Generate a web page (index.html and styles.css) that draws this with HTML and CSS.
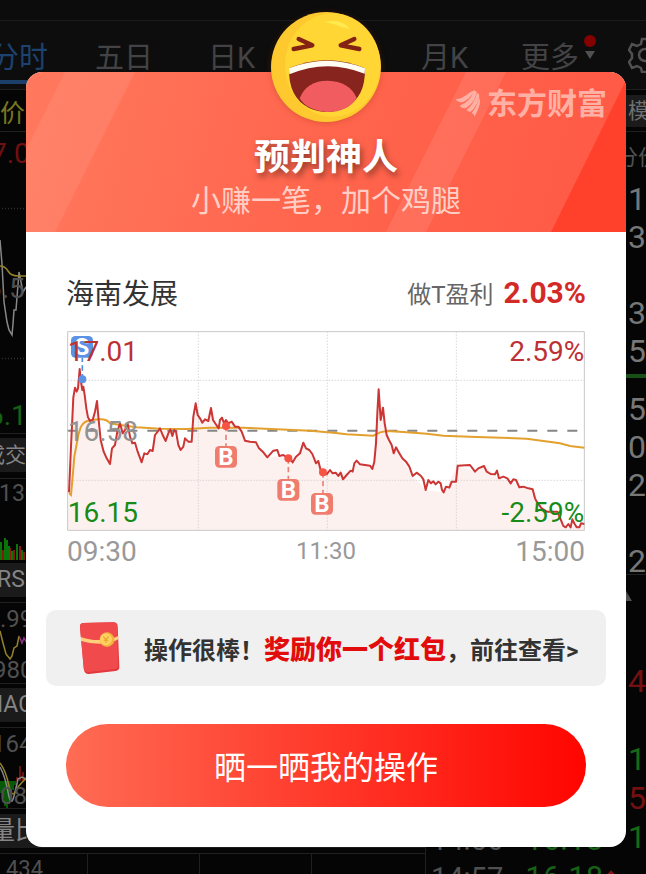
FILE: index.html
```
<!DOCTYPE html>
<html lang="zh-CN">
<head>
    <meta charset="UTF-8">
    <title>预判神人</title>
    <link rel="stylesheet" href="styles.css">
</head>
<body>
    <div class="quote">
        <div class="status"></div>
        <div class="tabs">
            <span class="tab active">分时</span>
            <span class="tab">五日</span>
            <span class="tab">日K</span>
            <span class="tab month">月K</span>
            <span class="tab more">更多<i class="dot"></i><i class="arrow"></i></span>
            <svg class="gear" width="34" height="36" viewBox="0 0 34 36">
                <path d="M14 2h7l1 5 4 2 5-2 3 6-4 4v4l4 4-3 6-5-2-4 2-1 4h-7l-1-4-4-2-5 2-3-6 3-4v-4l-3-4 3-6 5 2 4-2z"/>
                <circle cx="17" cy="18" r="6"/>
            </svg>
        </div>
        <div class="avg">
            <span>价</span>
            <span class="mode">模</span>
        </div>
        <div class="main">
            <div class="left">
                <div class="panel price">
                    <svg width="60" height="301">
                        <path class="dots" d="M2 76.500H60M2 226.500H60"/>
                        <path class="white-line" d="M0 108L2 132 4 170 7 190 9 198 12 203 13 192 14 178 16 178 19 140 21 150 23 160 26 155"/>
                        <path class="yellow-line" d="M0 134Q5 134 8 139T18 144H28"/>
                    </svg>
                    <span class="up">7.0</span>
                    <span class="mid">6.58</span>
                    <span class="down">6.1</span>
                </div>
                <div class="head deal">成交量</div>
                <div class="panel volume">
                    <span>130</span>
                    <svg width="60" height="24">
                        <path class="red-bar" d="M3 24V14M10 24V12M14 24V14M20 24V10M24 24V16"/>
                        <path class="green-bar" d="M1 24V6M5 24V2M7 24V4M9 24V10M12 24V15M17 24V8M22 24V14"/>
                    </svg>
                </div>
                <div class="head rsi">RSI</div>
                <div class="panel rs">
                    <svg width="60" height="80">
                        <path class="yellow-line" d="M0 28L3 40 6 51 10 56 12 53 14 45 17 43 19 33"/>
                        <path class="pink-line" d="M19 33L22 40 24 35 27 40"/>
                    </svg>
                    <span class="top">.99</span>
                    <span class="bottom">980</span>
                </div>
                <div class="head macd">MACD</div>
                <div class="panel mac">
                    <svg width="60" height="80">
                        <path class="green-bar" d="M1 53V65M3 53V70M5 53V78M7 53V80M9 53V76M11 53V68M13 53V62M15 53V57"/>
                        <path class="red-bar" d="M17 53V49M20 53V38M23 53V44M25 53V50"/>
                        <path class="white-line" d="M0 39Q5 48 8 64T14 68 18 51L22 49 26 51"/>
                        <path class="yellow-line" d="M0 35Q6 43 9 58T18 59L26 50"/>
                    </svg>
                    <span class="top">164</span>
                    <span class="bottom">08.</span>
                </div>
                <div class="head ratio">量比</div>
                <div class="panel last"><span>434</span></div>
            </div>
            <div class="ticks">
                <p>14:56 <b>16.18</b></p>
                <p>14:57 <b>16.18</b><i></i></p>
            </div>
            <div class="right">
                <div class="label">分价</div>
                <div class="num">1</div>
                <div class="num">3</div>
                <div class="num"></div>
                <div class="num">3</div>
                <div class="num">5</div>
                <div class="bar"></div>
                <div class="num">5</div>
                <div class="num">0</div>
                <div class="num">2</div>
                <div class="num"></div>
                <div class="num line">2</div>
                <div class="triangle"></div>
                <div class="num red">4</div>
                <div class="num"></div>
                <div class="num green">1</div>
                <div class="num red">5</div>
                <div class="num green">1</div>
            </div>
        </div>
    </div>

    <div class="card">
        <svg class="emoji" width="122" height="122" viewBox="0 0 366 366">
            <circle cx="183" cy="186" r="165" fill="#fdc92f"/>
            <ellipse cx="203" cy="180" rx="143" ry="155" fill="#ffd633"/>
            <path d="M178 52Q225 38 256 71Q228 67 213 59Q195 55 178 52Z" fill="#ffea4f"/>
            <path d="M101 102L142 121 86 132M268 102L227 121 283 132" fill="none" stroke="#842213" stroke-width="13" stroke-linecap="round" stroke-linejoin="round"/>
            <path d="M72 190Q186 142 300 190Q302 278 240 309Q186 333 132 309Q70 278 72 190Z" fill="#87241e"/>
            <path d="M104 280Q125 227 188 227Q254 229 275 279Q250 321 186 321Q126 317 104 280Z" fill="#f15c60"/>
            <path d="M72 190Q186 145 300 190L299 206Q186 160 73 208Z" fill="#fffdf2"/>
        </svg>
        <div class="header">
            <svg class="stripes" width="600" height="160">
                <path d="M39 0H109L29 160H-41Z" fill="#fff" opacity=".08"/>
                <path d="M440 0H480L400 160H360Z" fill="#fff" opacity=".09"/>
                <path d="M604 0L525 160H600V0Z" fill="#ff3b25" opacity=".8"/>
            </svg>
            <div class="logo">
                <svg width="28" height="28" viewBox="0 0 84 84">
                    <path d="M4 28Q22 29 48 7Q61 0 63 2Q47 26 29 35Q13 41 4 28Z"/>
                    <path d="M17 47Q48 36 60 3Q66 0 68 8Q61 39 36 54Q25 57 17 47Z"/>
                    <path d="M37 60Q60 44 69 9Q75 9 76 17Q71 47 50 65Q43 66 37 60Z"/>
                    <path d="M53 69Q71 48 75 20Q81 38 74 52Q70 65 61 81Q62 72 53 69Z"/>
                </svg>
                <span>东方财富</span>
            </div>
            <h2>预判神人</h2>
            <p>小赚一笔，加个鸡腿</p>
        </div>
        <div class="content">
            <div class="stock">
                <span class="name">海南发展</span>
                <span class="label">做T盈利</span>
                <span class="profit">2.03%</span>
            </div>
            <svg class="chart" width="520" height="200" viewBox="18 33 1560 600">
                <path class="area" d="M27 517L33 380 40 232 50 215 59 147 70 200 84 292 98 300 111 243 122 360 150 432 156 385 180 310 203 310 217 370 245 427 278 393 293 335 331 328 362 390 375 355 395 365 407 250 427 308 453 264 476 325 498 300 535 320 555 362 588 367 622 412 658 408 698 427 730 368 775 423 783 455 880 460 890 422 937 447 956 208 980 345 1058 468 1097 510 1151 517 1193 437 1245 455 1272 438 1317 475 1418 508 1445 565 1492 575 1520 622 1573 612V631H23Z"/>
                <path class="grid" d="M415 35V631M802 35V631M1189 35V631M23 181H1573M23 481H1573"/>
                <path class="middle" d="M22 332H1573"/>
                <path class="frame" d="M23 35H1573V631H23Z"/>
                <path class="average" d="M27 520L33 525 38 470 43 410 50 372 55 345 62 322Q70 305 85 302T120 298 150 310L180 315 230 322 300 326 380 327 450 323 550 323 650 328 750 332 820 338 860 343 940 347 960 337 980 333 1030 336 1100 341 1150 347 1250 351 1400 356 1500 370 1530 378 1573 383"/>
                <path class="now" d="M27 517L33 380 40 232 45 203 50 215 54 205 59 147 62 180 67 210 70 200 74 225 79 265 84 292 90 303 98 300 105 275 111 243 116 300 122 360 131 395 140 415 150 432 156 385 165 375 172 335 180 310 188 340 195 330 203 310 210 350 217 370 225 368 233 395 245 427 253 400 262 403 270 390 278 393 285 345 293 335 300 325 308 345 317 363 325 340 331 328 337 348 343 330 348 335 355 375 362 390 370 380 375 355 385 365 395 365 400 290 407 250 413 285 420 295 427 308 435 298 445 303 453 264 459 300 467 312 476 325 480 300 486 293 492 310 498 300 505 310 515 305 525 320 535 320 545 335 555 362 570 365 588 367 597 385 610 397 622 412 640 392 652 390 658 408 670 405 680 412 690 415 698 427 708 410 720 400 730 368 738 385 748 390 757 402 768 430 775 423 783 455 790 463 800 463 810 450 818 460 827 458 835 468 842 458 849 478 860 465 872 452 878 455 883 430 890 422 900 433 930 437 937 447 943 425 948 370 952 280 956 208 962 300 969 263 974 310 980 345 987 360 995 375 1001 400 1008 382 1017 398 1027 415 1038 425 1048 440 1058 468 1070 458 1083 468 1090 478 1097 510 1105 480 1113 490 1120 484 1127 493 1135 485 1142 490 1146 510 1151 517 1158 500 1168 503 1175 485 1188 485 1193 437 1230 435 1245 455 1255 445 1272 438 1280 455 1292 462 1305 463 1311 452 1317 475 1330 470 1342 475 1352 490 1360 478 1368 480 1378 502 1390 500 1405 505 1418 508 1425 535 1430 545 1445 565 1460 575 1492 575 1502 598 1510 618 1517 622 1525 612 1532 622 1537 598 1544 612 1550 622 1558 622 1563 610 1573 612"/>
                <g class="sell">
                    <path d="M67 178V113"/>
                    <circle cx="67" cy="178" r="12"/>
                    <rect x="33" y="48" width="66" height="65" rx="13"/>
                    <text x="66" y="106">S</text>
                </g>
                <g class="buy">
                    <path d="M498 318V380M685 415V480M789 457V520"/>
                    <circle cx="498" cy="318" r="12"/>
                    <circle cx="685" cy="415" r="12"/>
                    <circle cx="789" cy="457" r="12"/>
                    <rect x="465" y="378" width="66" height="65" rx="13"/>
                    <rect x="652" y="477" width="66" height="65" rx="13"/>
                    <rect x="753" y="519" width="66" height="65" rx="13"/>
                    <text x="498" y="436">B</text>
                    <text x="685" y="535">B</text>
                    <text x="786" y="577">B</text>
                </g>
                <g class="labels">
                    <text class="red" x="23" y="122">17.01</text>
                    <text class="red end" x="1573" y="122">2.59%</text>
                    <text class="gray" x="23" y="362">16.58</text>
                    <text class="green" x="23" y="605">16.15</text>
                    <text class="green end" x="1573" y="605">-2.59%</text>
                </g>
            </svg>
            <div class="times">
                <span>09:30</span>
                <span class="noon">11:30</span>
                <span>15:00</span>
            </div>
        </div>
        <div class="reward">
            <svg width="44" height="56" viewBox="0 0 132 168">
                <path d="M18 9Q8 10 9 22L21 151Q24 163 36 162L116 153Q127 151 127 140L122 18Q121 7 110 7Z" fill="#e2383e"/>
                <path d="M18 9Q8 10 9 22L20 145Q22 156 34 156L113 147Q123 146 123 136L120 18Q119 7 109 7Z" fill="#f04a4c"/>
                <path d="M11 51Q40 62 75 60Q104 57 124 48V58Q104 69 75 71Q40 72 12 63Z" fill="#ffd07c"/>
                <circle cx="90" cy="59" r="22" fill="#f2b23c"/>
                <circle cx="87" cy="58" r="18" fill="#ffd162"/>
                <path d="M79 50L87 59 95 49M87 59V69M80 61H94" fill="none" stroke="#eda831" stroke-width="4"/>
            </svg>
            <span class="text">操作很棒！<b>奖励你一个红包</b>，前往查看&gt;</span>
        </div>
        <button type="button" class="btn">晒一晒我的操作</button>
    </div>
</body>
</html>
```

FILE: styles.css
```
* {
    box-sizing: border-box;
}
body {
    margin: 0;
    height: 874px;
    overflow: hidden;
    position: relative;
    background-color: #050505;
    font-family: Roboto, "Noto Sans CJK SC", sans-serif;
}
p, h2 {
    margin: 0;
}
.quote {
    height: 874px;
    overflow: hidden;
    color: #505050;
}
.status {
    height: 21px;
    background-color: #0c0c0c;
    border-bottom: 1px solid #1b1b1b;
}
.tabs {
    display: flex;
    height: 69px;
    padding-top: 16px;
    background-color: #0d0d0d;
    border-bottom: 1px solid #202020;
    font-size: 29px;
    line-height: 42px;
    white-space: nowrap;
}
.tab {
    flex: none;
    width: 113px;
    color: #434345;
}
.tab.active {
    width: 105px;
    height: 47px;
    margin-left: -10px;
    color: #1c426f;
    border-bottom: 4px solid #1c3f69;
}
.tab.month {
    margin-left: 100px;
    width: 100px;
}
.tab.more {
    display: flex;
    width: 107px;
}
.dot {
    width: 12px;
    height: 12px;
    margin: -2px 0 0 5px;
    border-radius: 50%;
    background-color: #850000;
}
.arrow {
    margin: 14px 0 0 -11px;
    width: 0;
    height: 0;
    border: 5px solid transparent;
    border-top: 8px solid #505050;
    border-bottom: 0;
}
.gear {
    flex: none;
    fill: none;
    stroke: #505050;
    stroke-width: 2.5;
}
.avg {
    display: flex;
    justify-content: space-between;
    align-items: center;
    height: 42px;
    border-bottom: 1px solid #202020;
    font-size: 25px;
    color: #77771e;
}
.mode {
    width: 20px;
    height: 32px;
    padding-left: 2px;
    overflow: hidden;
    background-color: #1b1b1b;
    color: #707070;
    font-size: 21px;
    line-height: 33px;
}
.main {
    display: flex;
    height: 742px;
}
.left {
    width: 425px;
    white-space: nowrap;
}
.panel {
    position: relative;
    overflow: hidden;
    border-bottom: 1px solid #202020;
    font-size: 24px;
    line-height: 30px;
}
.panel svg {
    display: block;
    fill: none;
    stroke-width: 1.5;
}
.panel span {
    position: absolute;
}
.price {
    height: 302px;
    font-size: 28px;
}
.price .up {
    left: -9px;
    top: 7px;
    color: #701010;
}
.price .mid {
    left: -14px;
    top: 142px;
}
.price .down {
    left: -12px;
    top: 269px;
    color: #176017;
}
.dots {
    stroke: #303030;
    stroke-dasharray: 1 2;
}
.white-line {
    stroke: #888;
}
.yellow-line {
    stroke: #948329;
}
.pink-line {
    stroke: #8c3384;
}
.red-bar {
    stroke: #8b1710;
}
.green-bar {
    stroke: #087508;
}
.head {
    margin-top: 4px;
    height: 34px;
    background-color: #1b1b1b;
    color: #858585;
    font-size: 23px;
    line-height: 34px;
}
.deal {
    text-indent: -16px;
    font-size: 21px;
}
.volume {
    height: 88px;
    margin-top: 6px;
    border-top: 1px solid #202020;
    border-bottom: 0;
}
.volume span {
    left: -1px;
    top: 0;
    font-size: 23px;
}
.volume svg {
    margin-top: 57px;
}
.volume svg path {
    stroke-width: 2;
}
.rsi {
    margin-top: -3px;
    text-indent: -3px;
}
.rs {
    height: 82px;
    margin-top: 5px;
    border-top: 1px solid #202020;
}
.top {
    left: 0;
    top: 1px;
}
.rs .bottom {
    left: -7px;
    top: 52px;
}
.macd {
    text-indent: -17px;
}
.mac {
    height: 82px;
    margin-top: 5px;
    border-top: 1px solid #202020;
}
.mac .top {
    left: -8px;
}
.mac .bottom {
    left: 0;
    top: 53px;
}
.ratio {
    margin-top: 5px;
    text-indent: -10px;
    font-size: 25px;
}
.last {
    height: 27px;
    margin-top: 5px;
    border-top: 1px solid #202020;
    border-bottom: 0;
    background: linear-gradient(#202020, #202020) 87px 0 / 1px 100% no-repeat, linear-gradient(#202020, #202020) 199px 0 / 1px 100% no-repeat, linear-gradient(#202020, #202020) 311px 0 / 1px 100% no-repeat;
}
.last span {
    left: 6px;
    top: 0;
    font-size: 22px;
}
.ticks {
    display: flex;
    flex-direction: column;
    justify-content: flex-end;
    width: 201px;
    padding-left: 5px;
    border-left: 1px solid #202020;
    font-size: 29px;
    line-height: 38px;
    white-space: nowrap;
}
.ticks p {
    display: flex;
}
.ticks p:last-child {
    height: 15px;
}
.ticks b {
    margin-left: 22px;
    font-weight: normal;
    font-size: 31px;
    color: #176017;
}
.ticks i {
    width: 8px;
    height: 8px;
    margin: 13px 0 0 4px;
    background-color: #801414;
    transform: rotate(45deg);
}
.right {
    width: 20px;
    overflow: hidden;
    white-space: nowrap;
}
.right .label {
    height: 48px;
    text-indent: -10px;
    font-size: 22px;
    line-height: 51px;
}
.num {
    height: 38px;
    padding-left: 2px;
    font-size: 32px;
    line-height: 38px;
    color: #777;
}
.bar {
    height: 4px;
    margin: 4px 0 12px;
    background-color: #174f17;
}
.num.line {
    height: 33px;
    border-bottom: 1px solid #202020;
}
.triangle {
    width: 0;
    height: 0;
    margin: 16px 0 61px -6px;
    border: 6px solid transparent;
    border-bottom: 10px solid #505050;
    border-top: 0;
}
.triangle ~ .num {
    height: 39px;
    line-height: 39px;
}
.num.red {
    color: #751010;
}
.num.green {
    color: #176b17;
}
.card {
    position: absolute;
    left: 26px;
    top: 72px;
    width: 600px;
    height: 775px;
    border-radius: 16px;
    background-color: #fff;
}
.emoji {
    position: absolute;
    left: 239px;
    top: -67px;
    z-index: 2;
    filter: drop-shadow(0 1px 3px rgba(150, 50, 0, 0.3));
}
.header {
    position: relative;
    height: 160px;
    overflow: hidden;
    border-radius: 16px 16px 0 0;
    background: linear-gradient(105deg, #ff795e 0%, #ff654d 50%, #ff5945 100%);
    text-align: center;
}
.stripes {
    position: absolute;
    left: 0;
    top: 0;
}
.logo {
    position: absolute;
    right: 19px;
    top: 13px;
    display: flex;
    align-items: center;
    gap: 5px;
    color: #ffb0a4;
    font-size: 30px;
    font-weight: bold;
    line-height: 38px;
}
.logo svg {
    fill: #ffb0a4;
}
.header h2 {
    position: relative;
    padding-top: 60px;
    color: #fff;
    font-size: 36px;
    line-height: 52px;
    text-shadow: 2px 4px 6px rgba(70, 30, 20, 0.6);
}
.header p {
    position: relative;
    margin-top: -3px;
    color: #ffcfc6;
    font-size: 30px;
    line-height: 40px;
}
.content {
    padding: 39px 40px 0;
}
.stock {
    display: flex;
    align-items: center;
    height: 42px;
    color: #333;
    font-size: 28px;
}
.stock .label {
    margin-left: auto;
    color: #666;
    font-size: 24px;
}
.profit {
    margin-left: 10px;
    color: #d32a28;
    font-size: 30px;
    font-weight: bold;
}
.chart {
    display: block;
    margin-top: 18px;
    fill: none;
}
.area {
    fill: #fdf1f0;
}
.grid {
    stroke: #c6c6c6;
    stroke-width: 3;
    stroke-dasharray: 3 6;
}
.middle {
    stroke: #858585;
    stroke-width: 6;
    stroke-dasharray: 30;
}
.frame {
    stroke: #c8c8c8;
    stroke-width: 3;
}
.average {
    stroke: #e3a02d;
    stroke-width: 6;
}
.now {
    stroke: #cb3534;
    stroke-width: 6;
    stroke-linejoin: round;
}
.sell, .buy {
    font-size: 72px;
    font-weight: bold;
    text-anchor: middle;
}
.sell path, .buy path {
    stroke-width: 5;
    stroke-dasharray: 16 10;
}
.sell path {
    stroke: #538de0;
}
.sell circle, .sell rect {
    fill: #5b92e5;
}
.buy path {
    stroke: #e68375;
}
.buy circle {
    fill: #f75342;
}
.buy rect {
    fill: #ee7d70;
}
.sell text, .buy text {
    fill: #fff;
}
.labels {
    font-size: 84px;
}
.labels .end {
    text-anchor: end;
}
.labels .red {
    fill: #bd3034;
}
.labels .gray {
    fill: #929292;
}
.labels .green {
    fill: #178b17;
}
.times {
    display: flex;
    justify-content: space-between;
    align-items: center;
    height: 40px;
    padding: 0 1px;
    color: #999;
    font-size: 28px;
}
.noon {
    font-size: 24px;
}
.reward {
    display: flex;
    align-items: center;
    height: 76px;
    margin: 39px 20px 0;
    padding-left: 31px;
    border-radius: 10px;
    background-color: #f0f0f0;
    color: #333;
    font-size: 24px;
    font-weight: bold;
    white-space: nowrap;
}
.reward .text {
    margin-left: 23px;
    padding-bottom: 2px;
}
.reward b {
    color: #e20c0c;
    font-size: 26px;
}
.btn {
    display: block;
    width: 520px;
    height: 83px;
    margin: 38px 40px 0;
    padding: 0 0 2px;
    border: none;
    border-radius: 42px;
    background: linear-gradient(90deg, #ff6c54, #ff0500);
    color: #fff;
    font-family: inherit;
    font-size: 32px;
}
```
